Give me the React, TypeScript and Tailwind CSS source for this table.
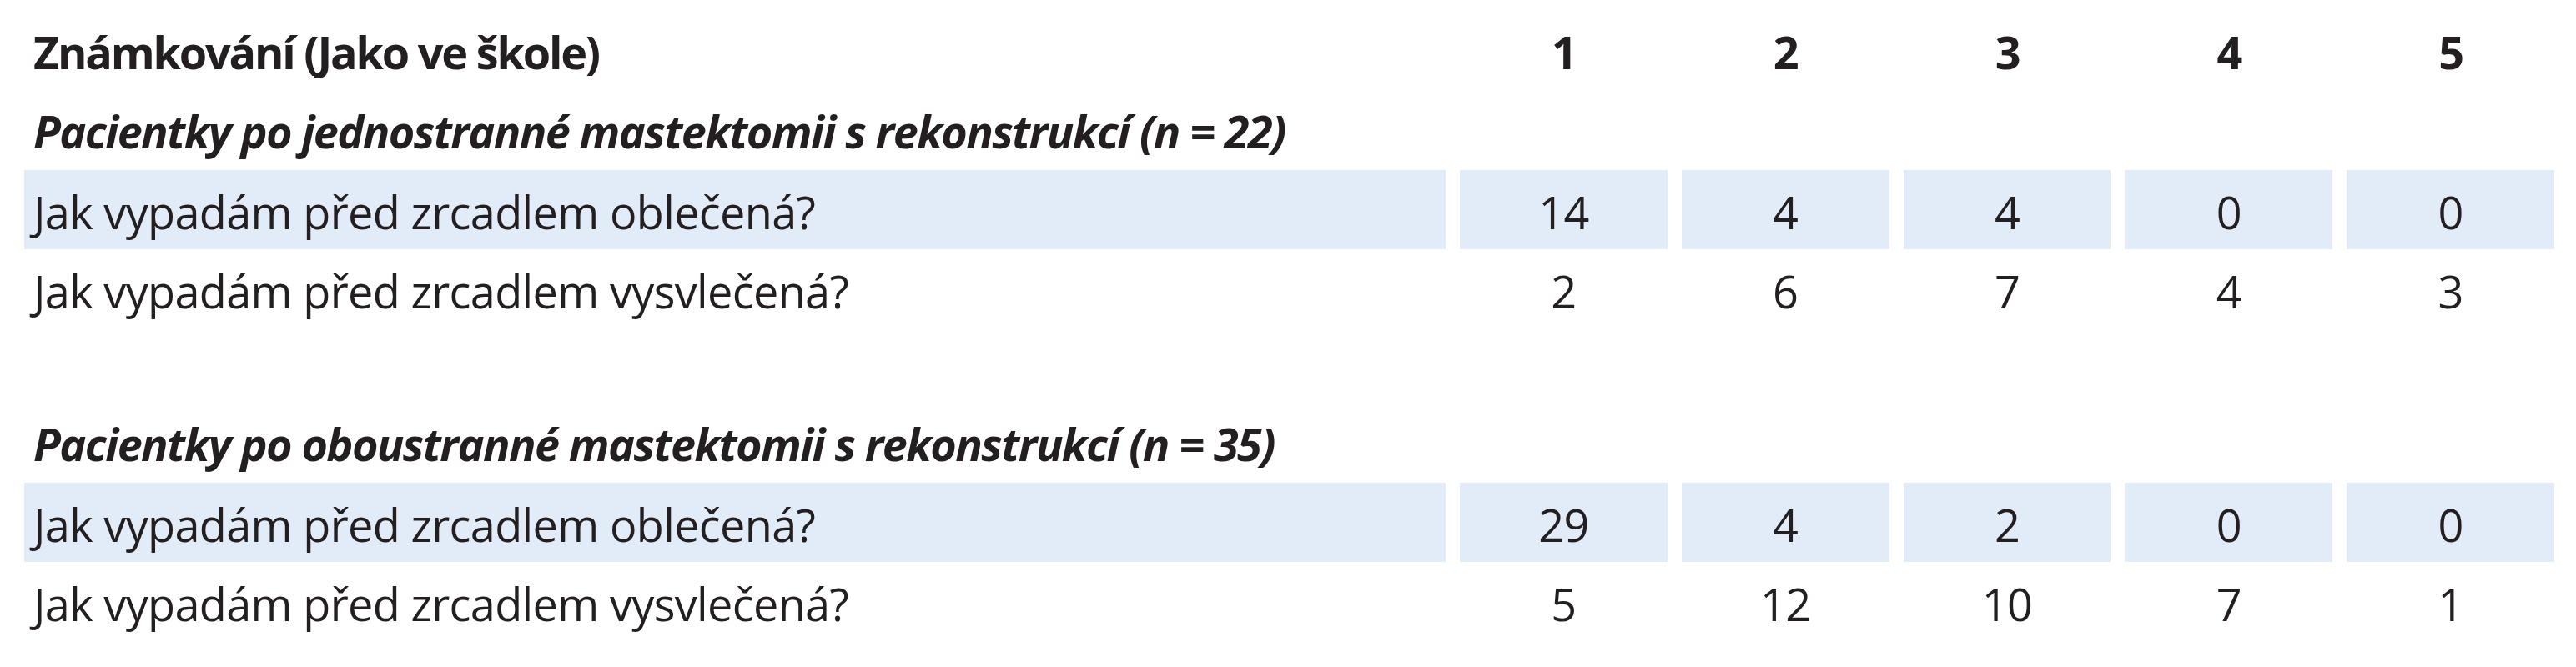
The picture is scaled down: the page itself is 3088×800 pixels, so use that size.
import React from "react";

type Row = { label: string; values: number[]; shaded?: boolean };
type Section = { title: string; rows: Row[] };

const sections: Section[] = [
  {
    title: "Pacientky po jednostranné mastektomii s rekonstrukcí (n = 22)",
    rows: [
      { label: "Jak vypadám před zrcadlem oblečená?", values: [14, 4, 4, 0, 0], shaded: true },
      { label: "Jak vypadám před zrcadlem vysvlečená?", values: [2, 6, 7, 4, 3] },
    ],
  },
  {
    title: "Pacientky po oboustranné mastektomii s rekonstrukcí (n = 35)",
    rows: [
      { label: "Jak vypadám před zrcadlem oblečená?", values: [29, 4, 2, 0, 0], shaded: true },
      { label: "Jak vypadám před zrcadlem vysvlečená?", values: [5, 12, 10, 7, 1] },
    ],
  },
];

const grid = "grid grid-cols-[1704px_repeat(5,1fr)] gap-x-[17px]";

const TableRow = ({ row }: { row: Row }) => {
  const bg = row.shaded ? "bg-[#e2ecf8]" : "";
  return (
    <div className={`${grid} h-[95px] tracking-[-0.012em]`}>
      <div className={`${bg} flex items-center pl-[11px] pt-[4px]`}>{row.label}</div>
      {row.values.map((v, i) => (
        <div key={i} className={`${bg} flex items-center justify-center pt-[4px]`}>
          {v}
        </div>
      ))}
    </div>
  );
};

export default function App() {
  return (
    <div
      className="w-[3088px] h-[800px] bg-white pl-[29px] pr-[26px] pt-[14px] text-[#231f20] text-[54px] leading-none"
      style={{ fontFamily: '"Open Sans", "Noto Sans", sans-serif' }}
    >
      <div className={`${grid} h-[96px] font-bold tracking-[-0.041em]`}>
        <div className="flex items-center pl-[11px]">Známkování (Jako ve škole)</div>
        {[1, 2, 3, 4, 5].map((n) => (
          <div key={n} className="flex items-center justify-center">
            {n}
          </div>
        ))}
      </div>
      {sections.map((s, si) => (
        <div key={si} className={si > 0 ? "mt-[91px]" : ""}>
          <div className="h-[94px] flex items-center pl-[11px] font-bold italic tracking-[-0.03em]">
            {s.title}
          </div>
          {s.rows.map((r, ri) => (
            <TableRow key={ri} row={r} />
          ))}
        </div>
      ))}
    </div>
  );
}
